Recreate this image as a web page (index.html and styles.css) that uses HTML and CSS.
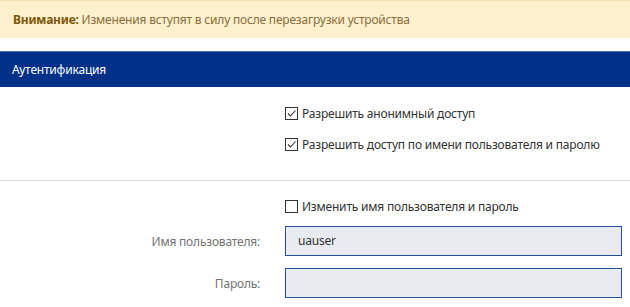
FILE: index.html
```html
<!DOCTYPE html>
<html lang="ru">
<head>
<meta charset="utf-8">
<link rel="stylesheet" href="styles.css">
</head>
<body>
<div class="alert"><b>Внимание:</b> Изменения вступят в силу после перезагрузки устройства</div>
<div class="panel-head">Аутентификация</div>
<div class="section first">
  <div class="row check-row">
    <span class="label"></span>
    <label class="check"><span class="box on"><svg viewBox="0 0 13 13" width="13" height="13"><path d="M3 6.5l2.5 2.5L10.5 3.5" fill="none" stroke="#333" stroke-width="1.1"/></svg></span>Разрешить анонимный доступ</label>
  </div>
  <div class="row check-row">
    <span class="label"></span>
    <label class="check"><span class="box on"><svg viewBox="0 0 13 13" width="13" height="13"><path d="M3 6.5l2.5 2.5L10.5 3.5" fill="none" stroke="#333" stroke-width="1.1"/></svg></span>Разрешить доступ по имени пользователя и паролю</label>
  </div>
</div>
<div class="section second">
  <div class="row check-row">
    <span class="label"></span>
    <label class="check"><span class="box"></span>Изменить имя пользователя и пароль</label>
  </div>
  <div class="fields">
    <div class="row field-row">
      <span class="label">Имя пользователя:</span>
      <div class="input">uauser</div>
    </div>
    <div class="row field-row">
      <span class="label">Пароль:</span>
      <div class="input"></div>
    </div>
  </div>
</div>
</body>
</html>
```
FILE: styles.css
```css
html, body { margin: 0; padding: 0; background: #fff; }
body {
  font-family: "Noto Sans", "Open Sans", sans-serif;
  font-size: 12px;
  letter-spacing: -0.2px;
  color: #333;
  width: 630px;
  overflow: hidden;
  white-space: nowrap;
}
.alert {
  height: 38px;
  box-sizing: border-box;
  padding: 11px 13px 0;
  background: #fdf0cd;
  border-top: 1px solid #f7e2ad;
  color: #8a6d3b;
  line-height: 16px;
}
.alert b { color: #7b5608; }
.panel-head {
  margin-top: 13px;
  height: 36px;
  box-sizing: border-box;
  background: #003087;
  border-top: 1px solid #4d6fa9;
  color: #fff;
  padding: 10px 12px 0;
  line-height: 16px;
}
.section.first {
  padding-top: 17px;
  padding-bottom: 27px;
  border-bottom: 1px solid #d9d9e3;
  display: flex;
  flex-direction: column;
  gap: 13px;
}
.section.second {
  padding-top: 16px;
  display: flex;
  flex-direction: column;
  gap: 11px;
}
.fields {
  display: flex;
  flex-direction: column;
  gap: 12px;
}
.row { display: flex; align-items: center; }
.label {
  width: 260px;
  flex: none;
  text-align: right;
  color: #737373;
  padding-right: 25px;
}
.check-row { height: 18px; }
.check { display: flex; align-items: center; color: #333; }
.box {
  width: 13px; height: 13px;
  box-sizing: border-box;
  border: 1px solid #333;
  margin-right: 4px;
  display: inline-flex;
  background: #fff;
}
.box svg { margin: -1px; }
.field-row { height: 30px; }
.input {
  width: 337px;
  height: 30px;
  box-sizing: border-box;
  border: 1px solid #27509b;
  background: #e8ebef;
  color: #333;
  padding: 0 0 0 12px;
  line-height: 28px;
}
```
